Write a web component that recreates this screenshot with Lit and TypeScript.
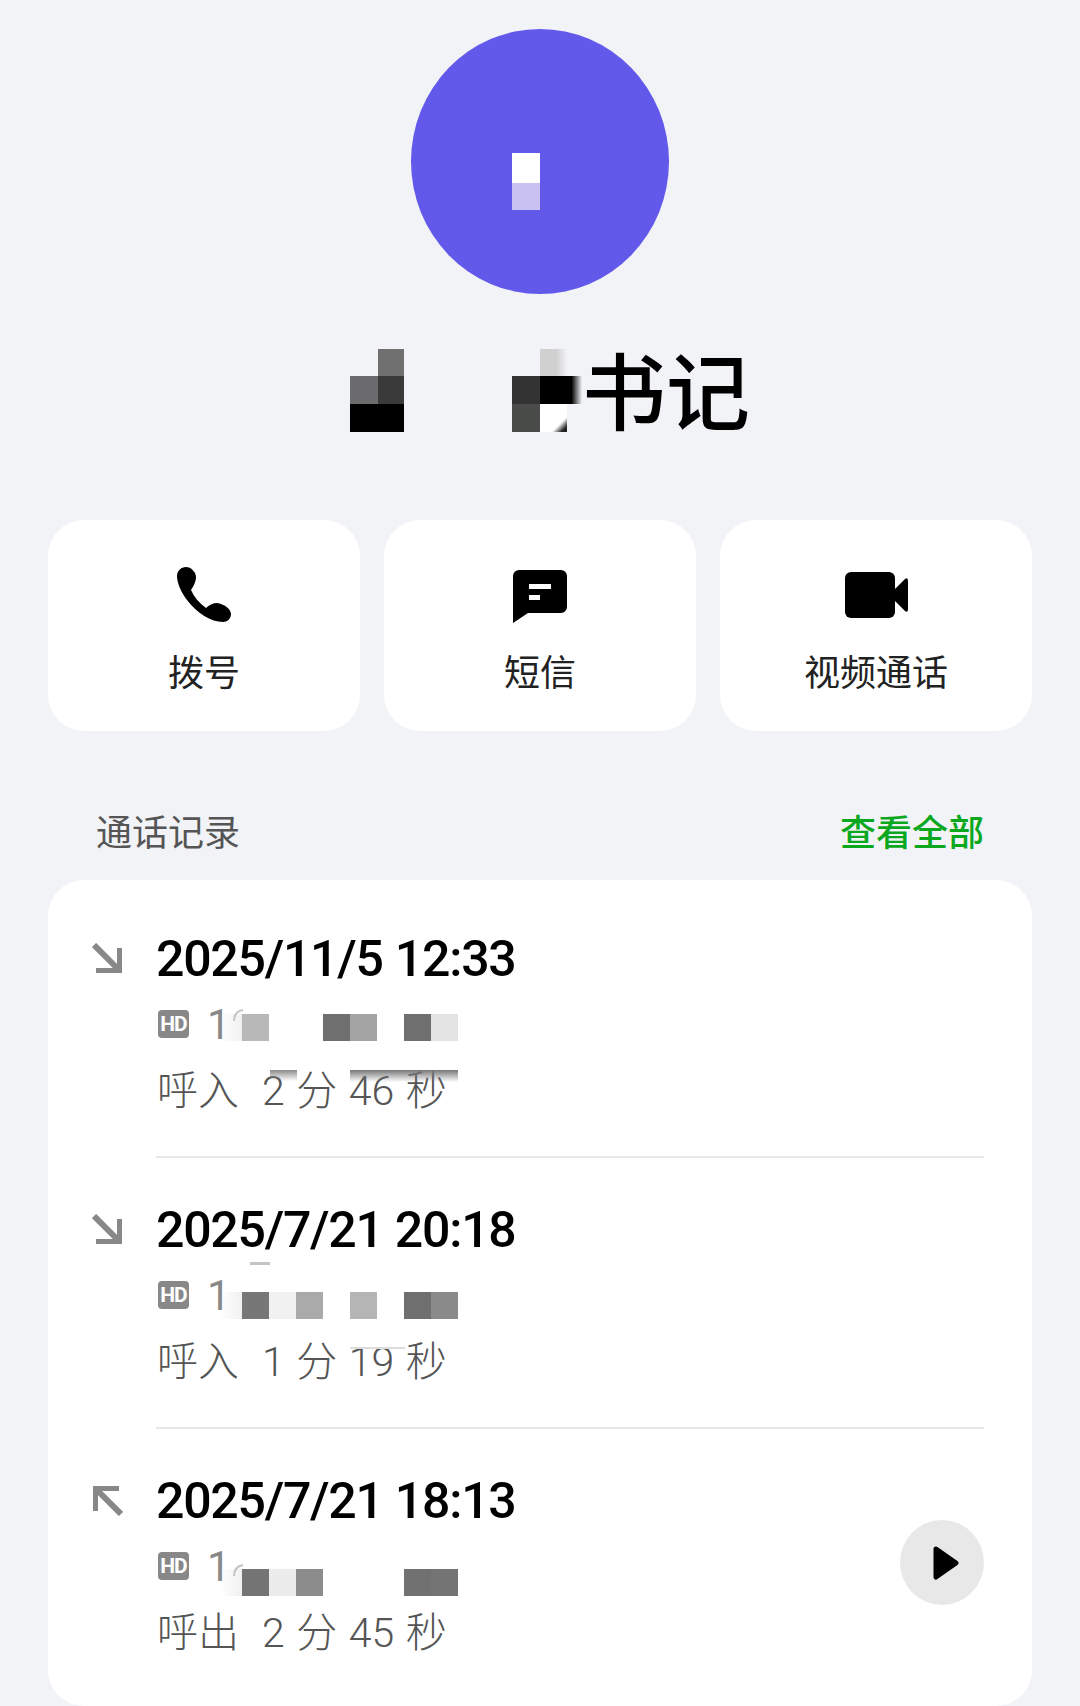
import { LitElement, css, html, svg } from "lit";
import { customElement } from "lit/decorators.js";

type Cell = [number, string];

interface Call {
  date: string;
  dir: "in" | "out";
  text: string;
  cells: Cell[];
  cellsTop: number;
  smears: { left: number; top: number; width: number; height: number; bg: string }[];
  arc: boolean;
  play: boolean;
}

const calls: Call[] = [
  {
    date: "2025/11/5 12:33",
    dir: "in",
    text: "呼入  2 分 46 秒",
    cellsTop: 85,
    cells: [[0, "#b8b8b8"], [3, "#6f6f6f"], [4, "#a4a4a4"], [6, "#6f6f6f"], [7, "#e4e4e4"]],
    smears: [
      { left: 114, top: 141, width: 27, height: 11, bg: "linear-gradient(#8a8a8a, rgba(255,255,255,0))" },
      { left: 194, top: 141, width: 108, height: 12, bg: "linear-gradient(#777, rgba(255,255,255,0))" },
    ],
    arc: true,
    play: false,
  },
  {
    date: "2025/7/21 20:18",
    dir: "in",
    text: "呼入  1 分 19 秒",
    cellsTop: 92,
    cells: [[0, "#777"], [1, "#f1f1f1"], [2, "#aaa"], [4, "#b5b5b5"], [6, "#6f6f6f"], [7, "#8a8a8a"]],
    smears: [
      { left: 94, top: 62, width: 20, height: 3, bg: "#c4c4c4" },
      { left: 194, top: 147, width: 55, height: 2, bg: "#dcdcdc" },
    ],
    arc: false,
    play: false,
  },
  {
    date: "2025/7/21 18:13",
    dir: "out",
    text: "呼出  2 分 45 秒",
    cellsTop: 98,
    cells: [[0, "#747474"], [1, "#ececec"], [2, "#8c8c8c"], [6, "#717171"], [7, "#747474"]],
    smears: [],
    arc: true,
    play: true,
  },
];

const arrow = svg`<path d="M2 2L26 26M28 5V28H4" fill="none" stroke="#888" stroke-width="6"/>`;

@customElement("app-root")
export class AppRoot extends LitElement {
  static styles = css`
    :host {
      display: block;
      width: 1080px;
      height: 1706px;
      overflow: hidden;
      background: #f2f3f7;
      font-family: Roboto, "Noto Sans CJK SC", sans-serif;
      color: #000;
    }
    .avatar {
      width: 258px;
      height: 265px;
      margin: 29px auto 55px;
      border-radius: 50%;
      background: #6259ea;
      display: flex;
      justify-content: center;
    }
    .avatar-mark {
      width: 28px;
      height: 57px;
      margin: 124px 28px 0 0;
      background: linear-gradient(#fff 0 30px, #c9c1f2 30px);
    }
    .name {
      display: flex;
      height: 83px;
      padding-left: 350px;
    }
    .blocks {
      display: grid;
      grid-template-rows: 27px 28px 28px;
    }
    .blocks.a {
      grid-template-columns: 28px 26px;
      margin-right: 108px;
    }
    .blocks.b {
      grid-template-columns: 28px 27px 15px;
    }
    .name-text {
      font-family: "Noto Sans CJK SC", sans-serif;
      font-size: 84px;
      font-weight: 500;
      line-height: 83px;
      margin-top: -3px;
    }
    .actions {
      display: grid;
      grid-template-columns: repeat(3, 312px);
      gap: 24px;
      padding: 0 48px;
      margin-top: 88px;
    }
    .action {
      height: 211px;
      background: #fff;
      border-radius: 36px;
      display: flex;
      flex-direction: column;
      align-items: center;
      padding-top: 47px;
      box-sizing: border-box;
    }
    .action-icon {
      display: block;
      height: 56px;
    }
    .action-label {
      margin-top: 22px;
      font-family: "Noto Sans CJK SC", sans-serif;
      font-size: 36px;
      line-height: 50px;
      color: #222;
    }
    .section {
      display: flex;
      justify-content: space-between;
      padding: 0 96px;
      margin: 74px 0 25px;
      font-family: "Noto Sans CJK SC", sans-serif;
      font-size: 36px;
      line-height: 50px;
      color: #555;
    }
    .all {
      color: #0aa81e;
      font-weight: 500;
    }
    .list {
      margin: 0 48px;
      height: 826px;
      box-sizing: border-box;
      padding-top: 7px;
      background: #fff;
      border-radius: 36px;
    }
    .call {
      display: flex;
      padding: 42px 48px 0 44px;
    }
    .dir {
      width: 30px;
      height: 30px;
      margin: 14px 34px 0 0;
      flex: none;
    }
    .dir.out {
      transform: rotate(180deg) translate(-1px, -1px);
    }
    .body {
      position: relative;
      flex: 1;
      display: flex;
      justify-content: space-between;
      height: 229px;
      box-sizing: border-box;
      border-bottom: 2px solid #e8e8e8;
    }
    .call:last-child .body {
      border-bottom: none;
    }
    .date {
      font-size: 50px;
      font-weight: 500;
      line-height: 60px;
      letter-spacing: -1.25px;
      word-spacing: 1px;
    }
    .phone {
      display: flex;
      align-items: center;
      height: 70px;
      font-size: 42px;
      font-weight: 400;
      color: #888;
    }
    .hd {
      width: 31px;
      height: 28px;
      margin-left: 2px;
      border-radius: 4px;
      background: #888;
      color: #fff;
      font-size: 21px;
      font-weight: 700;
      line-height: 28px;
      text-align: center;
      letter-spacing: -1px;
    }
    .phone-head {
      margin-left: 18px;
    }
    .duration {
      padding-left: 1px;
      font-size: 41px;
      line-height: 64px;
      font-weight: 300;
      color: #555;
      white-space: pre;
      word-spacing: 1.5px;
    }
    .cover {
      position: absolute;
      left: 64px;
      width: 23px;
      height: 27px;
      background: linear-gradient(90deg, rgba(240, 240, 240, 0), #f0f0f0);
    }
    .arc {
      position: absolute;
      left: 77px;
      width: 12px;
      height: 14px;
    }
    .cells {
      position: absolute;
      left: 86px;
      display: grid;
      grid-template-columns: repeat(8, 27px);
      height: 27px;
    }
    .smear {
      position: absolute;
    }
    .play {
      width: 84px;
      height: 85px;
      margin-top: 49px;
      border-radius: 50%;
      background: #e8e8e8;
      display: flex;
      align-items: center;
      justify-content: center;
    }
    .play svg {
      margin-left: 8px;
    }
  `;

  render() {
    return html`
      <div class="avatar"><div class="avatar-mark"></div></div>
      <div class="name">
        <div class="blocks a">
          <i></i><i style="background:#6f6f6f"></i>
          <i style="background:#6c6c6e"></i><i style="background:#3a3a3a"></i>
          <i style="background:#000"></i><i style="background:#000"></i>
        </div>
        <div class="blocks b">
          <i></i><i style="background:linear-gradient(90deg,#d0d0d0 60%,#f2f3f7)"></i><i></i>
          <i style="background:#333"></i><i style="background:#000"></i><i style="background:linear-gradient(90deg,#000 30%,rgba(0,0,0,0))"></i>
          <i style="background:#4a4c4a"></i><i style="background:linear-gradient(135deg,#fff 72%,#222 90%)"></i><i></i>
        </div>
        <div class="name-text">书记</div>
      </div>

      <div class="actions">
        <div class="action">
          <svg class="action-icon" width="54" height="56" viewBox="0 0 54 56">
            <path d="M9 0C14 0 19 5 19 10C19 15 16 20 14 23C17 30 22 36 29 41C32 38 36 36 40 36C47 37 54 42 54 47C54 52 50 55 46 55C34 55 20 46 10 33C4 25 0 16 0 9C0 4 4 0 9 0z" fill="#000"/>
          </svg>
          <div class="action-label">拨号</div>
        </div>
        <div class="action">
          <svg class="action-icon" width="54" height="56" viewBox="0 -3 54 56">
            <path d="M6 0H48a6 6 0 0 1 6 6V37a6 6 0 0 1-6 6H15L0 53V6a6 6 0 0 1 6-6z" fill="#000"/>
            <path d="M16 14H38V19H16zM16 25H27V30H16z" fill="#fff"/>
          </svg>
          <div class="action-label">短信</div>
        </div>
        <div class="action">
          <svg class="action-icon" width="63" height="56" viewBox="0 -5 63 56">
            <rect width="50" height="46" rx="6" fill="#000"/>
            <path d="M50 17L60 7Q63 5 63 9V37Q63 41 60 39L50 29z" fill="#000"/>
          </svg>
          <div class="action-label">视频通话</div>
        </div>
      </div>

      <div class="section"><span>通话记录</span><span class="all">查看全部</span></div>

      <div class="list">
        ${calls.map((c) => this.renderCall(c))}
      </div>
    `;
  }

  renderCall(c: Call) {
    return html`
      <div class="call">
        <svg class="dir ${c.dir}" viewBox="0 0 30 30">${arrow}</svg>
        <div class="body">
          <div>
            <div class="date">${c.date}</div>
            <div class="phone"><span class="hd">HD</span><span class="phone-head">1</span></div>
            <div class="duration">${c.text}</div>
          </div>
          <div class="cover" style="top:${c.cellsTop}px"></div>
          ${c.arc
            ? html`<svg class="arc" style="top:${c.cellsTop - 6}px" viewBox="0 0 12 14">
                <path d="M1 13C1 7 4 3 10 2" fill="none" stroke="#c4c4c4" stroke-width="2"/>
              </svg>`
            : ""}
          <div class="cells" style="top:${c.cellsTop}px">
            ${c.cells.map(([col, bg]) => html`<i style="grid-column:${col + 1};background:${bg}"></i>`)}
          </div>
          ${c.smears.map(
            (s) => html`<div class="smear" style="left:${s.left}px;top:${s.top}px;width:${s.width}px;height:${s.height}px;background:${s.bg}"></div>`
          )}
          ${c.play
            ? html`<div class="play">
                <svg width="26" height="34" viewBox="0 0 26 34">
                  <path d="M3 3L23 17L3 31z" fill="#000" stroke="#000" stroke-width="5" stroke-linejoin="round"/>
                </svg>
              </div>`
            : ""}
        </div>
      </div>
    `;
  }
}
